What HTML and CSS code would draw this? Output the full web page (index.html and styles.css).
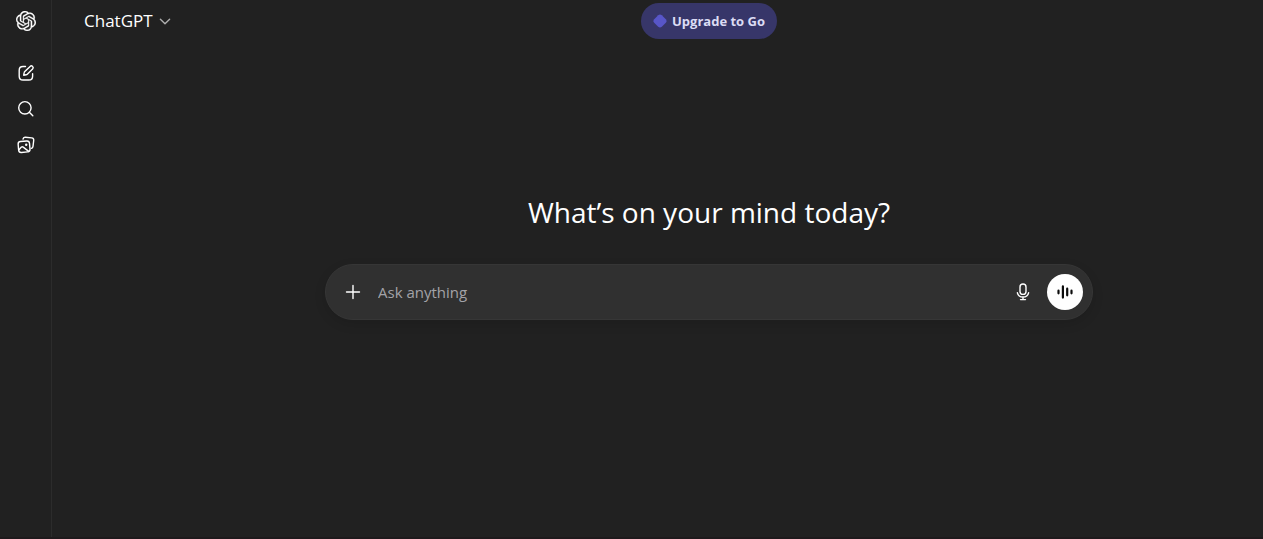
FILE: index.html
```html
<!DOCTYPE html>
<html lang="en">
<head>
    <meta charset="UTF-8">
    <title>ChatGPT</title>
    <link rel="stylesheet" href="styles.css">
</head>
<body>
    <div class="app">
        <nav class="sidebar">
            <a class="side-link logo" href="#" aria-label="Home">
                <svg width="20" height="20" viewBox="0 0 24 24" fill="currentColor" stroke="currentColor" stroke-width=".3"><path d="M22.2819 9.8211a5.9847 5.9847 0 0 0-.5157-4.9108 6.0462 6.0462 0 0 0-6.5098-2.9A6.0651 6.0651 0 0 0 4.9807 4.1818a5.9847 5.9847 0 0 0-3.9977 2.9 6.0462 6.0462 0 0 0 .7427 7.0966 5.98 5.98 0 0 0 .511 4.9107 6.051 6.051 0 0 0 6.5146 2.9001A5.9847 5.9847 0 0 0 13.2599 24a6.0557 6.0557 0 0 0 5.7718-4.2058 5.9894 5.9894 0 0 0 3.9977-2.9001 6.0557 6.0557 0 0 0-.7475-7.0729zm-9.022 12.6081a4.4755 4.4755 0 0 1-2.8764-1.0408l.1419-.0804 4.7783-2.7582a.7948.7948 0 0 0 .3927-.6813v-6.7369l2.02 1.1686a.071.071 0 0 1 .038.052v5.5826a4.504 4.504 0 0 1-4.4945 4.4944zm-9.6607-4.1254a4.4708 4.4708 0 0 1-.5346-3.0137l.142.0852 4.783 2.7582a.7712.7712 0 0 0 .7806 0l5.8428-3.3685v2.3324a.0804.0804 0 0 1-.0332.0615L9.74 19.9502a4.4992 4.4992 0 0 1-6.1408-1.6464zM2.3408 7.8956a4.485 4.485 0 0 1 2.3655-1.9728V11.6a.7664.7664 0 0 0 .3879.6765l5.8144 3.3543-2.0201 1.1685a.0757.0757 0 0 1-.071 0l-4.8303-2.7865A4.504 4.504 0 0 1 2.3408 7.872zm16.5963 3.8558L13.1038 8.364 15.1192 7.2a.0757.0757 0 0 1 .071 0l4.8303 2.7913a4.4944 4.4944 0 0 1-.6765 8.1042v-5.6772a.79.79 0 0 0-.407-.667zm2.0107-3.0231l-.142-.0852-4.7735-2.7818a.7759.7759 0 0 0-.7854 0L9.409 9.2297V6.8974a.0662.0662 0 0 1 .0284-.0615l4.8303-2.7866a4.4992 4.4992 0 0 1 6.6802 4.66zM8.3065 12.863l-2.02-1.1638a.0804.0804 0 0 1-.038-.0567V6.0742a4.4992 4.4992 0 0 1 7.3757-3.4537l-.142.0805L8.704 5.459a.7948.7948 0 0 0-.3927.6813zm1.0976-2.3654l2.602-1.4998 2.6069 1.4998v2.9994l-2.5974 1.4997-2.6067-1.4997Z"/></svg>
            </a>
            <a class="side-link" href="#" aria-label="New chat">
                <svg class="line" width="20" height="20" viewBox="0 0 20 20"><path d="M9.5 3.5H7Q3.2 3.5 3.2 7.2V13.2Q3.2 17 7 17H12.8Q16.6 17 16.6 13.2V10.8"/><path d="M14.1 3.4a1.75 1.75 0 0 1 2.5 2.5L11.3 11.2Q10.8 11.7 10.1 11.8L7.7 12.2 8.1 9.9Q8.2 9.2 8.8 8.6Z"/></svg>
            </a>
            <a class="side-link" href="#" aria-label="Search chats">
                <svg class="line" width="20" height="20" viewBox="0 0 20 20"><circle cx="8.9" cy="8.8" r="6.2"/><path d="M13.3 13.2L16.8 16.7"/></svg>
            </a>
            <a class="side-link" href="#" aria-label="Library">
                <svg class="line" width="20" height="20" viewBox="0 0 20 20"><path d="M7 4.1Q7.3 2 9.4 2.2L15.7 2.9Q18 3.2 17.7 5.5L17 11.4Q16.8 13 15.4 13.4"/><rect x="2.4" y="6.2" width="11.4" height="11" rx="2.6" transform="rotate(-5 8 12)"/><path d="M3.2 14.4L5.4 12.1Q6.3 11.4 7.2 12.1L12.7 16.4"/><circle cx="10.2" cy="9.8" r="1.2" fill="currentColor" stroke="none"/></svg>
            </a>
        </nav>

        <div class="page">
            <header class="topbar">
                <button class="model" type="button">ChatGPT
                    <svg class="line" width="16" height="16" viewBox="0 0 16 16"><path d="M3.4 6.3L8 10.8L12.6 6.3"/></svg>
                </button>
                <button class="upgrade" type="button">
                    <svg width="14" height="14" viewBox="0 0 14 14" fill="currentColor"><path d="M5.2 1.2Q7-.4 8.8 1.2L12.8 5.2Q14.4 7 12.8 8.8L8.8 12.8Q7 14.4 5.2 12.8L1.2 8.8Q-.4 7 1.2 5.2Z"/></svg>
                    Upgrade to Go
                </button>
            </header>

            <main class="content">
                <h1>What’s on your mind today?</h1>
                <form class="composer">
                    <button class="round" type="button" aria-label="Add files">
                        <svg class="line" width="20" height="20" viewBox="0 0 20 20"><path d="M10 3.5V16.5M3.5 10H16.5"/></svg>
                    </button>
                    <input class="prompt" type="text" aria-label="Ask anything" placeholder="Ask anything">
                    <button class="round" type="button" aria-label="Dictate">
                        <svg class="line" width="20" height="20" viewBox="0 0 20 20"><rect x="7" y="2" width="6" height="10.4" rx="3"/><path d="M4.4 10.8C5 13.5 7 15 10 15S15 13.5 15.6 10.8M10 15V17.5M7.5 17.6H12.5"/></svg>
                    </button>
                    <button class="round voice" type="button" aria-label="Use voice mode">
                        <svg width="20" height="20" viewBox="0 0 20 20"><path d="M3.5 8.7V11.3M7.9 4.4V15.6M12.2 6.7V13.3M16.5 8.7V11.3"/></svg>
                    </button>
                </form>
            </main>
        </div>
    </div>
</body>
</html>
```
FILE: styles.css
```css
* {
    box-sizing: border-box;
}
body {
    margin: 0;
    background-color: #212121;
    color: #fff;
    font-family: "Open Sans", "Noto Sans", sans-serif;
}
button {
    border: none;
    padding: 0;
    background: none;
    color: inherit;
    font-family: inherit;
    cursor: pointer;
}
svg {
    display: block;
    flex: none;
}
.line {
    fill: none;
    stroke: currentColor;
    stroke-width: 1.4;
    stroke-linecap: round;
    stroke-linejoin: round;
}
.app {
    display: flex;
    min-height: 100vh;
    border-bottom: 2px solid #1e1a1c;
}
.sidebar {
    width: 52px;
    padding: 3px 8px 0 8px;
    border-right: 1px solid #2c2c2c;
}
.side-link {
    display: flex;
    align-items: center;
    justify-content: center;
    height: 36px;
    color: #fff;
}
.logo {
    margin-bottom: 16px;
}
.page {
    flex: 1;
    min-width: 0;
}
.topbar {
    display: grid;
    grid-template-columns: 103px 1fr;
    align-items: center;
    padding-top: 3px;
}
.model {
    display: flex;
    align-items: center;
    grid-area: 1 / 1 / 2 / 3;
    justify-self: start;
    gap: 4px;
    padding-left: 32px;
    font-size: 17px;
    line-height: 28px;
}
.model svg {
    color: #afafaf;
}
.upgrade {
    display: flex;
    align-items: center;
    grid-area: 1 / 2;
    justify-self: center;
    gap: 5px;
    height: 36px;
    padding: 0 12px;
    border-radius: 18px;
    background-color: #373669;
    color: #dcdcf4;
    font-size: 13px;
    font-weight: 700;
}
.upgrade svg {
    color: #5856c8;
}
.content {
    padding: 156px 0 0 103px;
}
h1 {
    margin: 0 0 35px 0;
    font-size: 28px;
    font-weight: 400;
    line-height: 34px;
    text-align: center;
}
.composer {
    display: flex;
    align-items: center;
    max-width: 768px;
    height: 56px;
    margin: 0 auto;
    padding: 0 9px;
    border: 1px solid #363636;
    border-radius: 28px;
    background-color: #303030;
    box-shadow: 0 4px 12px rgba(0, 0, 0, 0.12);
}
.round {
    display: flex;
    align-items: center;
    justify-content: center;
    width: 36px;
    height: 36px;
    border-radius: 50%;
}
.prompt {
    flex: 1;
    min-width: 0;
    padding: 0 7px;
    border: none;
    outline: none;
    background: none;
    color: #fff;
    font-family: inherit;
    font-size: 15px;
}
.prompt::placeholder {
    color: #a3a3a8;
    opacity: 1;
}
.voice {
    margin-left: 6px;
    background-color: #fff;
    color: #0d0d0d;
}
.voice svg {
    fill: none;
    stroke: currentColor;
    stroke-width: 2.2;
    stroke-linecap: round;
}
```
